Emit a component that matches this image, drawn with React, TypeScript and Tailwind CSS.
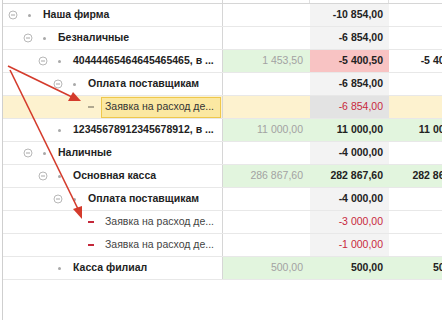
import React from "react";

type Row = {
  level: number;
  label: string;
  kind: "group" | "leaf" | "doc";
  c2?: string;
  c3: string;
  c4?: string;
  tone?: "green" | "pinkMid" | "selected";
  red?: boolean;
};

const rows: Row[] = [
  { level: 0, label: "Наша фирма", kind: "group", c3: "-10 854,00" },
  { level: 1, label: "Безналичные", kind: "group", c3: "-6 854,00" },
  { level: 2, label: "40444465464645465465, в ...", kind: "group", c2: "1 453,50", c3: "-5 400,50", c4: "-5 400,50", tone: "pinkMid" },
  { level: 3, label: "Оплата поставщикам", kind: "group", c3: "-6 854,00" },
  { level: 4, label: "Заявка на расход де...", kind: "doc", c3: "-6 854,00", tone: "selected", red: true },
  { level: 2, label: "12345678912345678912, в ...", kind: "leaf", c2: "11 000,00", c3: "11 000,00", c4: "11 000,00", tone: "green" },
  { level: 1, label: "Наличные", kind: "group", c3: "-4 000,00" },
  { level: 2, label: "Основная касса", kind: "group", c2: "286 867,60", c3: "282 867,60", c4: "282 867,60", tone: "green" },
  { level: 3, label: "Оплата поставщикам", kind: "group", c3: "-4 000,00" },
  { level: 4, label: "Заявка на расход де...", kind: "doc", c3: "-3 000,00", red: true },
  { level: 4, label: "Заявка на расход де...", kind: "doc", c3: "-1 000,00", red: true },
  { level: 2, label: "Касса филиал", kind: "leaf", c2: "500,00", c3: "500,00", c4: "500,00", tone: "green" },
];

const indents = ["pl-[5px]", "pl-[20px]", "pl-[35px]", "pl-[50px]", "pl-[65px]"];

function Expander() {
  return (
    <svg width="10" height="10" viewBox="0 0 10 10" className="shrink-0">
      <circle cx="5" cy="5" r="4" fill="white" stroke="#b8b8b8" strokeWidth="1" />
      <line x1="3" y1="5" x2="7" y2="5" stroke="#a8a8a8" strokeWidth="1" />
    </svg>
  );
}

function Dot() {
  return <span className="w-[3px] h-[3px] rounded-full bg-[#a9a9a9] shrink-0" />;
}

function TreeCell({ row }: { row: Row }) {
  if (row.kind === "doc") {
    const selected = row.tone === "selected";
    return (
      <div className="flex items-center h-full pl-[85px] whitespace-nowrap">
        <span className={`w-[6px] h-[2px] shrink-0 ${selected ? "bg-[#b0a890]" : "bg-[#c4283a]"}`} />
        {selected ? (
          <div className="ml-[7px] flex-1 h-[21px] flex items-center pl-[3px] bg-[#fbe8a2] border border-[#efc84c] text-[#333]">
            {row.label}
          </div>
        ) : (
          <span className="ml-[11px] text-[#444]">{row.label}</span>
        )}
      </div>
    );
  }
  return (
    <div className={`flex items-center h-full ${indents[row.level]}`}>
      <span className="w-[10px] flex justify-center">{row.kind === "group" ? <Expander /> : null}</span>
      <span className="w-[16px] flex justify-center ml-[3px]">
        <Dot />
      </span>
      <span className="ml-[6px] font-bold text-[#222] whitespace-nowrap">{row.label}</span>
    </div>
  );
}

export default function App() {
  return (
    <div className="relative w-[442px] h-[320px] overflow-hidden bg-white text-[10.5px] font-['Liberation_Sans',Arial,sans-serif]">
      <div className="ml-[2px] h-full border-l border-[#cfcfcf] w-[530px]">
        <div className="flex h-[4px] border-b border-[#d6d6d6]">
          <div className="w-[220px] border-r border-[#d6d6d6]" />
          <div className="w-[87px] border-r border-[#e0e0e0]" />
          <div className="w-[79px] border-r border-[#e0e0e0]" />
          <div className="w-[82px]" />
        </div>
        {rows.map((row, i) => {
          const sel = row.tone === "selected";
          const green = row.tone === "green";
          const pink = row.tone === "pinkMid";
          const c2bg = sel ? "bg-[#fdf2cf]" : green || pink ? "bg-[#e2f5de]" : "bg-white";
          const c3bg = sel ? "bg-[#e3e3e3]" : green ? "bg-[#e2f5de]" : pink ? "bg-[#f8c3c3]" : "bg-[#f3f3f3]";
          const c4bg = sel ? "bg-[#fdf2cf]" : green ? "bg-[#e2f5de]" : "bg-white";
          return (
            <div key={i} className={`flex h-[23px] border-b border-[#e8e8e8] ${sel ? "bg-[#fdf2cf]" : ""}`}>
              <div className="w-[220px] border-r border-[#d6d6d6] pr-[1px]">
                <TreeCell row={row} />
              </div>
              <div className={`w-[87px] flex items-center justify-end pr-[7px] text-[#a2a2a2] ${c2bg}`}>{row.c2}</div>
              <div
                className={`w-[79px] flex items-center justify-end pr-[6px] ${c3bg} ${
                  row.red ? "text-[#c8283c]" : "font-bold text-[#222]"
                }`}
              >
                {row.c3}
              </div>
              <div className={`w-[82px] flex items-center justify-end pr-[6px] font-bold text-[#222] whitespace-nowrap ${c4bg}`}>
                {row.c4}
              </div>
            </div>
          );
        })}
      </div>
      <svg className="absolute left-0 top-0 pointer-events-none" width="442" height="320">
        <line x1="8" y1="66" x2="72" y2="97" stroke="#d43b2c" strokeWidth="1.6" />
        <polygon points="81,101 68,101 73,92" fill="#d43b2c" />
        <line x1="10" y1="70" x2="78" y2="209" stroke="#d43b2c" strokeWidth="1.6" />
        <polygon points="82,219 73,209 82,206" fill="#d43b2c" />
      </svg>
    </div>
  );
}
